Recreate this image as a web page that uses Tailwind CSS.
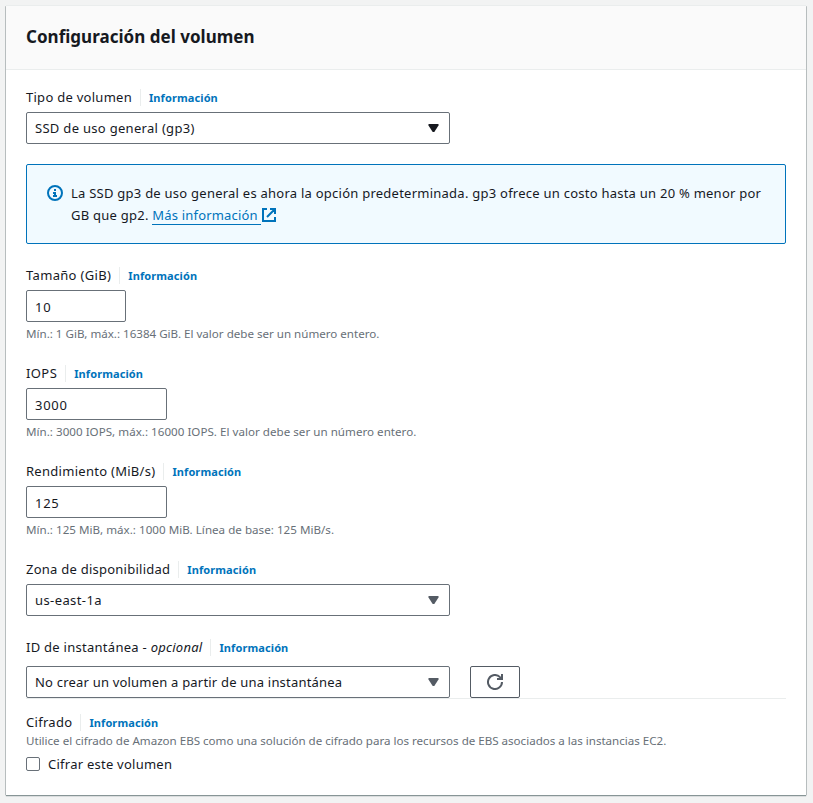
<!DOCTYPE html>
<html lang="es">
<head>
<meta charset="utf-8">
<title>Configuración del volumen</title>
<script src="https://cdn.jsdelivr.net/npm/@tailwindcss/browser@4"></script>
</head>
<body class="h-[803px] overflow-hidden bg-[#f2f3f3] px-1.5 pt-1.5 font-['Noto_Sans',sans-serif] text-[13px] leading-[22px] tracking-[.245px] text-[#16191f]">
<main class="h-[789px] w-[800px] bg-white shadow-[0_1px_0_0_#879596,0_1px_1px_0_#687078,-1px_0_0_0_#c8cdcd,1px_0_0_0_#c8cdcd,0_-1px_0_0_#eaeded]">
  <header class="h-16 border-b border-[#eaeded] bg-[#fafafa] px-5 pt-5">
    <h2 class="text-[17px] leading-[22px] font-bold tracking-[.02px]">Configuración del volumen</h2>
  </header>
  <div class="px-5 pt-4">
    <section>
      <div class="flex h-[22px] items-center"><label class="tracking-[.27px]">Tipo de volumen</label><a class="ml-2 flex h-[17px] items-center border-l border-[#eaeded] pt-px pl-2 text-[11px] font-bold tracking-[.1px] text-[#0073bb]">Información</a></div>
      <div class="mt-1 flex h-8 w-[424px] items-center justify-between rounded-[2px] border border-[#687078] pr-[10.5px] pl-2"><span class="tracking-[.3px]">SSD de uso general (gp3)</span><svg class="h-2 w-[11px]" viewBox="0 0 11 8"><path d="M.5 0h10v1.5L6.3 8H4.7L.5 1.5z" fill="#16191f"/></svg></div>
    </section>
    <div class="mt-5 flex h-20 rounded-[2px] border border-[#0073bb] bg-[#f1faff] pt-[17px] pl-5">
      <svg class="mt-[3px] h-4 w-4 shrink-0" viewBox="0 0 16 16" fill="none" stroke="#0073bb" stroke-width="2"><circle cx="8" cy="8" r="7"/><path d="M7 5h2M6 8h2v3M6 11h4"/></svg>
      <p class="ml-2 whitespace-nowrap">La SSD gp3 de uso general es ahora la opción predeterminada. gp3 ofrece un costo hasta un 20 % menor por<br>GB que gp2. <a class="inline-block h-[21px] border-b border-[#0073bb] pr-[3px] tracking-[.19px] text-[#0073bb]">Más información</a><svg class="ml-px inline-block h-[14px] w-[14px] align-[-2px]" viewBox="0 0 14 14" fill="none" stroke="#0073bb" stroke-width="2"><path d="M5 1H1v12h12V9M8 1h5v5M13 1L5 9"/></svg></p>
    </div>
    <section class="mt-5">
      <div class="flex h-[22px] items-center"><label class="tracking-[.33px]">Tamaño (GiB)</label><a class="ml-2 flex h-[17px] items-center border-l border-[#eaeded] pt-px pl-2 text-[11px] font-bold tracking-[.1px] text-[#0073bb]">Información</a></div>
      <div class="mt-1 flex h-8 w-[100px] items-center rounded-[2px] border border-[#687078] pt-[2px] pl-2 tracking-[.75px]">10</div>
      <p class="mt-1 text-[11.6px] leading-4 tracking-[-.01px] text-[#687078]">Mín.: 1 GiB, máx.: 16384 GiB. El valor debe ser un número entero.</p>
    </section>
    <section class="mt-5">
      <div class="flex h-[22px] items-center"><label class="tracking-[.4px]">IOPS</label><a class="ml-2 flex h-[17px] items-center border-l border-[#eaeded] pt-px pl-2 text-[11px] font-bold tracking-[.1px] text-[#0073bb]">Información</a></div>
      <div class="mt-1 flex h-8 w-[141px] items-center rounded-[2px] border border-[#687078] pt-[2px] pl-2 tracking-[.75px]">3000</div>
      <p class="mt-1 text-[11.6px] leading-4 tracking-[.02px] text-[#687078]">Mín.: 3000 IOPS, máx.: 16000 IOPS. El valor debe ser un número entero.</p>
    </section>
    <section class="mt-5">
      <div class="flex h-[22px] items-center"><label class="tracking-[.28px]">Rendimiento (MiB/s)</label><a class="ml-2 flex h-[17px] items-center border-l border-[#eaeded] pt-px pl-2 text-[11px] font-bold tracking-[.1px] text-[#0073bb]">Información</a></div>
      <div class="mt-1 flex h-8 w-[141px] items-center rounded-[2px] border border-[#687078] pt-[2px] pl-2 tracking-[.75px]">125</div>
      <p class="mt-1 text-[11.6px] leading-4 tracking-[.02px] text-[#687078]">Mín.: 125 MiB, máx.: 1000 MiB. Línea de base: 125 MiB/s.</p>
    </section>
    <section class="mt-5">
      <div class="flex h-[22px] items-center"><label>Zona de disponibilidad</label><a class="ml-2 flex h-[17px] items-center border-l border-[#eaeded] pt-px pl-2 text-[11px] font-bold tracking-[.1px] text-[#0073bb]">Información</a></div>
      <div class="mt-1 flex h-8 w-[424px] items-center justify-between rounded-[2px] border border-[#687078] pr-[10.5px] pl-2"><span class="tracking-[.4px]">us-east-1a</span><svg class="h-2 w-[11px]" viewBox="0 0 11 8"><path d="M.5 0h10v1.5L6.3 8H4.7L.5 1.5z" fill="#545b64"/></svg></div>
    </section>
    <section class="mt-5 border-b border-[#eaeded]">
      <div class="flex h-[22px] items-center"><label class="tracking-[.27px]">ID de instantánea - <em>opcional</em></label><a class="ml-2 flex h-[17px] items-center border-l border-[#eaeded] pt-px pl-2 text-[11px] font-bold tracking-[.1px] text-[#0073bb]">Información</a></div>
      <div class="mt-2 flex gap-5">
        <div class="flex h-8 w-[424px] items-center justify-between rounded-[2px] border border-[#687078] pr-[10.5px] pl-2"><span class="tracking-[.2px]">No crear un volumen a partir de una instantánea</span><svg class="h-2 w-[11px]" viewBox="0 0 11 8"><path d="M.5 0h10v1.5L6.3 8H4.7L.5 1.5z" fill="#545b64"/></svg></div>
        <button class="flex h-8 w-[50px] items-center justify-center rounded-[2px] border border-[#545b64]"><svg class="h-4 w-4" viewBox="0 0 16 16" fill="none" stroke="#545b64" stroke-width="2"><path d="M15 8A7 7 0 1 1 13 3.1L15 5M10 5h5V0"/></svg></button>
      </div>
    </section>
    <section class="mt-3">
      <div class="flex h-[22px] items-center"><label class="tracking-[.3px]">Cifrado</label><a class="ml-2 flex h-[17px] items-center border-l border-[#eaeded] pt-px pl-2 text-[11px] font-bold tracking-[.1px] text-[#0073bb]">Información</a></div>
      <p class="text-[11.6px] leading-4 tracking-[-.014px] text-[#687078]">Utilice el cifrado de Amazon EBS como una solución de cifrado para los recursos de EBS asociados a las instancias EC2.</p>
      <div class="mt-1 flex h-[22px] items-center"><span class="h-[14px] w-[14px] rounded-[2px] border border-[#687078]"></span><span class="ml-2">Cifrar este volumen</span></div>
    </section>
  </div>
</main>
</body>
</html>
